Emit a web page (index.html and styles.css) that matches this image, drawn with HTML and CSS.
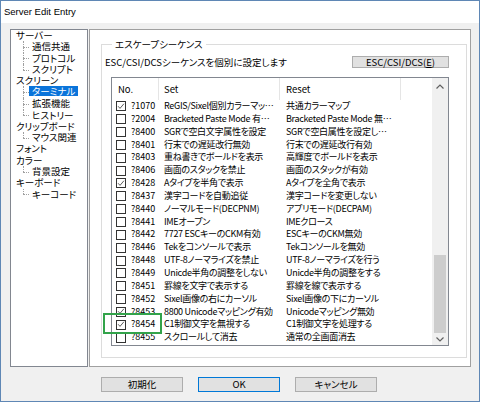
FILE: index.html
```html
<!DOCTYPE html>
<html lang="ja">
<head>
<meta charset="utf-8">
<title>Server Edit Entry</title>
<link rel="stylesheet" href="styles.css">
</head>
<body>
<div class="window">
  <div class="titlebar">Server Edit Entry</div>
  <div class="content">
    <div class="main">
      <ul class="tree">
        <li><span class="label">サーバー</span>
          <ul class="sub">
            <li><span class="label">通信共通</span></li>
            <li><span class="label">プロトコル</span></li>
            <li><span class="label">スクリプト</span></li>
          </ul>
        </li>
        <li><span class="label">スクリーン</span>
          <ul class="sub">
            <li><span class="label sel">ターミナル</span></li>
            <li><span class="label">拡張機能</span></li>
            <li><span class="label">ヒストリー</span></li>
          </ul>
        </li>
        <li><span class="label">クリップボード</span>
          <ul class="sub">
            <li><span class="label">マウス関連</span></li>
          </ul>
        </li>
        <li><span class="label">フォント</span></li>
        <li><span class="label">カラー</span>
          <ul class="sub">
            <li><span class="label">背景設定</span></li>
          </ul>
        </li>
        <li><span class="label">キーボード</span>
          <ul class="sub">
            <li><span class="label">キーコード</span></li>
          </ul>
        </li>
      </ul>
      <div class="page">
        <fieldset class="group">
          <legend>エスケープシーケンス</legend>
          <div class="desc-row">
            <span class="desc">ESC/CSI/DCSシーケンスを個別に設定します</span>
            <button class="btn esc">ESC/CSI/DCS(<u>E</u>)</button>
          </div>
          <div class="list">
            <div class="grid">
              <div class="hdr">
                <div class="c no">No.</div>
                <div class="c set">Set</div>
                <div class="c reset">Reset</div>
                <div class="c fill"></div>
              </div>
              <div class="row"><div class="c no"><span class="cb"><svg viewBox="0 0 9 9" width="9" height="9"><path d="M1.2 4.2 L3.4 6.6 L7.8 1.4" fill="none" stroke="#333" stroke-width="0.9"/></svg></span>?1070</div><div class="c set">ReGIS/Sixel個別カラーマッ…</div><div class="c reset">共通カラーマップ</div></div>
              <div class="row"><div class="c no"><span class="cb"></span>?2004</div><div class="c set">Bracketed Paste Mode 有…</div><div class="c reset">Bracketed Paste Mode 無…</div></div>
              <div class="row"><div class="c no"><span class="cb"></span>?8400</div><div class="c set">SGRで空白文字属性を設定</div><div class="c reset">SGRで空白属性を設定し…</div></div>
              <div class="row"><div class="c no"><span class="cb"></span>?8401</div><div class="c set">行末での遅延改行無効</div><div class="c reset">行末での遅延改行有効</div></div>
              <div class="row"><div class="c no"><span class="cb"></span>?8403</div><div class="c set">重ね書きでボールドを表示</div><div class="c reset">高輝度でボールドを表示</div></div>
              <div class="row"><div class="c no"><span class="cb"></span>?8406</div><div class="c set">画面のスタックを禁止</div><div class="c reset">画面のスタックが有効</div></div>
              <div class="row"><div class="c no"><span class="cb"><svg viewBox="0 0 9 9" width="9" height="9"><path d="M1.2 4.2 L3.4 6.6 L7.8 1.4" fill="none" stroke="#333" stroke-width="0.9"/></svg></span>?8428</div><div class="c set">Aタイプを半角で表示</div><div class="c reset">Aタイプを全角で表示</div></div>
              <div class="row"><div class="c no"><span class="cb"></span>?8437</div><div class="c set">漢字コードを自動追従</div><div class="c reset">漢字コードを変更しない</div></div>
              <div class="row"><div class="c no"><span class="cb"></span>?8440</div><div class="c set">ノーマルモード(DECPNM)</div><div class="c reset">アプリモード(DECPAM)</div></div>
              <div class="row"><div class="c no"><span class="cb"></span>?8441</div><div class="c set">IMEオープン</div><div class="c reset">IMEクロース</div></div>
              <div class="row"><div class="c no"><span class="cb"></span>?8442</div><div class="c set">7727 ESCキーのCKM有効</div><div class="c reset">ESCキーのCKM無効</div></div>
              <div class="row"><div class="c no"><span class="cb"></span>?8446</div><div class="c set">Tekをコンソールで表示</div><div class="c reset">Tekコンソールを無効</div></div>
              <div class="row"><div class="c no"><span class="cb"></span>?8448</div><div class="c set">UTF-8ノーマライズを禁止</div><div class="c reset">UTF-8ノーマライズを行う</div></div>
              <div class="row"><div class="c no"><span class="cb"></span>?8449</div><div class="c set">Unicde半角の調整をしない</div><div class="c reset">Unicde半角の調整をする</div></div>
              <div class="row"><div class="c no"><span class="cb"></span>?8451</div><div class="c set">罫線を文字で表示する</div><div class="c reset">罫線を線で表示する</div></div>
              <div class="row"><div class="c no"><span class="cb"></span>?8452</div><div class="c set">Sixel画像の右にカーソル</div><div class="c reset">Sixel画像の下にカーソル</div></div>
              <div class="row"><div class="c no"><span class="cb"><svg viewBox="0 0 9 9" width="9" height="9"><path d="M1.2 4.2 L3.4 6.6 L7.8 1.4" fill="none" stroke="#333" stroke-width="0.9"/></svg></span>?8453</div><div class="c set">8800 Unicodeマッピング有効</div><div class="c reset">Unicodeマッピング無効</div></div>
              <div class="row"><div class="c no"><span class="cb"><svg viewBox="0 0 9 9" width="9" height="9"><path d="M1.2 4.2 L3.4 6.6 L7.8 1.4" fill="none" stroke="#333" stroke-width="0.9"/></svg></span>?8454</div><div class="c set">C1制御文字を無視する</div><div class="c reset">C1制御文字を処理する</div></div>
              <div class="row"><div class="c no"><span class="cb"></span>?8455</div><div class="c set">スクロールして消去</div><div class="c reset">通常の全画面消去</div></div>
            </div>
            <div class="sb">
              <div class="sb-arrow up"><svg width="16" height="17" viewBox="0 0 16 17"><path d="M4.5 10.5 L8 7 L11.5 10.5" fill="none" stroke="#606060" stroke-width="1.2"/></svg></div>
              <div class="sb-track"><div class="sb-thumb"></div></div>
              <div class="sb-arrow down"><svg width="16" height="12" viewBox="0 0 16 12"><path d="M4.5 4.5 L8 8 L11.5 4.5" fill="none" stroke="#606060" stroke-width="1.2"/></svg></div>
            </div>
          </div>
        </fieldset>
      </div>
    </div>
    <div class="buttons">
      <button class="btn foot">初期化</button>
      <button class="btn foot ok">OK</button>
      <button class="btn foot">キャンセル</button>
    </div>
  </div>
  <div class="mark"></div>
</div>
</body>
</html>
```

FILE: styles.css
```css
* { box-sizing: border-box; }
html, body { margin: 0; padding: 0; }
body {
  width: 480px;
  height: 402px;
  overflow: hidden;
  background: #f0f0f0;
  font-family: "Noto Sans CJK JP", sans-serif;
  font-feature-settings: "palt";
  font-size: 9.5px;
  color: #000;
}
.window {
  position: relative;
  width: 480px;
  height: 402px;
  border: 1px solid #5f87b5;
  background: #f0f0f0;
  display: flex;
  flex-direction: column;
}
.titlebar {
  height: 22px;
  background: #fff;
  font-family: "Liberation Sans", sans-serif;
  font-feature-settings: normal;
  font-size: 9.5px;
  line-height: 22px;
  padding-left: 3px;
}
.content {
  flex: 1;
  display: flex;
  flex-direction: column;
  padding: 6px 8px 0 9px;
}
.main {
  display: flex;
  gap: 1px;
  height: 338px;
}

/* tree */
.tree {
  width: 78px;
  flex: none;
  background: #fff;
  border: 1px solid #828790;
  margin: 0;
  padding: 0 0 0 5px;
  list-style: none;
  line-height: 11.3px;
}
.tree li { white-space: nowrap; }
.sub {
  list-style: none;
  margin: 0;
  padding: 0 0 0 16px;
}
.sub li { position: relative; }
.sub li::before {
  content: "";
  position: absolute;
  left: -9px;
  top: 0;
  height: 100%;
  border-left: 1px dotted #a0a0a0;
}
.sub li:last-child::before { height: 50%; }
.sub li::after {
  content: "";
  position: absolute;
  left: -9px;
  top: 50%;
  width: 6px;
  border-top: 1px dotted #a0a0a0;
}
.label { display: inline-block; height: 11.3px; }
.sel {
  background: #0a74da;
  color: #fff;
  padding: 0 3px;
  margin-left: -3px;
  height: 10px;
  line-height: 10px;
  vertical-align: 0.5px;
}

/* right page */
.page {
  flex: 1;
  background: #fff;
  border: 1px solid #a0a0a0;
  padding: 9px 3px 8px 11px;
  display: flex;
}
.group {
  flex: 1;
  margin: 0;
  border: 1px solid #dcdcdc;
  padding: 6px 17px 11px 9px;
  min-width: 0;
  display: flex;
  flex-direction: column;
}
.group legend {
  padding: 0 3px;
  margin-left: 1px;
  line-height: 11px;
}
.desc-row {
  display: flex;
  align-items: center;
  justify-content: space-between;
  height: 12px;
  margin-left: -6px;
}
.btn {
  font: inherit;
  color: #000;
  background: #e1e1e1;
  border: 1px solid #adadad;
  padding: 0;
  margin: 0;
  border-radius: 0;
}
.esc {
  width: 97px;
  height: 12px;
  line-height: 10px;
}
.esc u { text-underline-offset: 1px; }

/* list */
.list {
  margin-top: 9px;
  flex: 1;
  border: 1px solid #828790;
  display: flex;
  background: #fff;
  overflow: hidden;
}
.grid {
  flex: 1;
  overflow: hidden;
}
.hdr, .row { display: flex; }
.hdr { height: 22px; line-height: 22px; }
.hdr .c { border-right: 1px solid #e5e5e5; }
.row {
  height: 12.85px;
  line-height: 12.85px;
  font-size: 9px;
  letter-spacing: -0.3px;
}
.c {
  white-space: nowrap;
  overflow: hidden;
  flex: none;
}
.c.no { width: 47px; }
.c.set { width: 121px; padding-left: 5px; }
.c.reset { width: 121px; padding-left: 6px; }
.c.fill { flex: 1; border-right: none; }
.hdr .c.no { padding-left: 6px; }
.row .c.no {
  padding-left: 4px;
  display: flex;
  align-items: center;
  gap: 5px;
  letter-spacing: 0;
}
.cb {
  width: 10px;
  height: 10px;
  border: 1px solid #333;
  background: #fff;
  flex: none;
  display: flex;
  align-items: center;
  justify-content: center;
}
.cb svg { display: block; }

/* scrollbar */
.sb {
  width: 16px;
  flex: none;
  background: #f0f0f0;
  display: flex;
  flex-direction: column;
}
.sb-arrow { flex: none; display: flex; }
.sb-track {
  flex: 1;
  display: flex;
  flex-direction: column;
  justify-content: flex-end;
  align-items: center;
}
.sb-thumb {
  width: 12px;
  height: 78px;
  background: #cdcdcd;
}

/* footer buttons */
.buttons {
  display: flex;
  gap: 15px;
  padding-left: 91px;
  margin-top: 10px;
}
.foot {
  width: 82px;
  height: 15px;
  line-height: 13px;
}
.ok { border-color: #0078d7; }

/* annotation */
.mark {
  position: absolute;
  left: 102px;
  top: 312px;
  width: 59px;
  height: 21px;
  border: 2.5px solid #32a34a;
}
```
